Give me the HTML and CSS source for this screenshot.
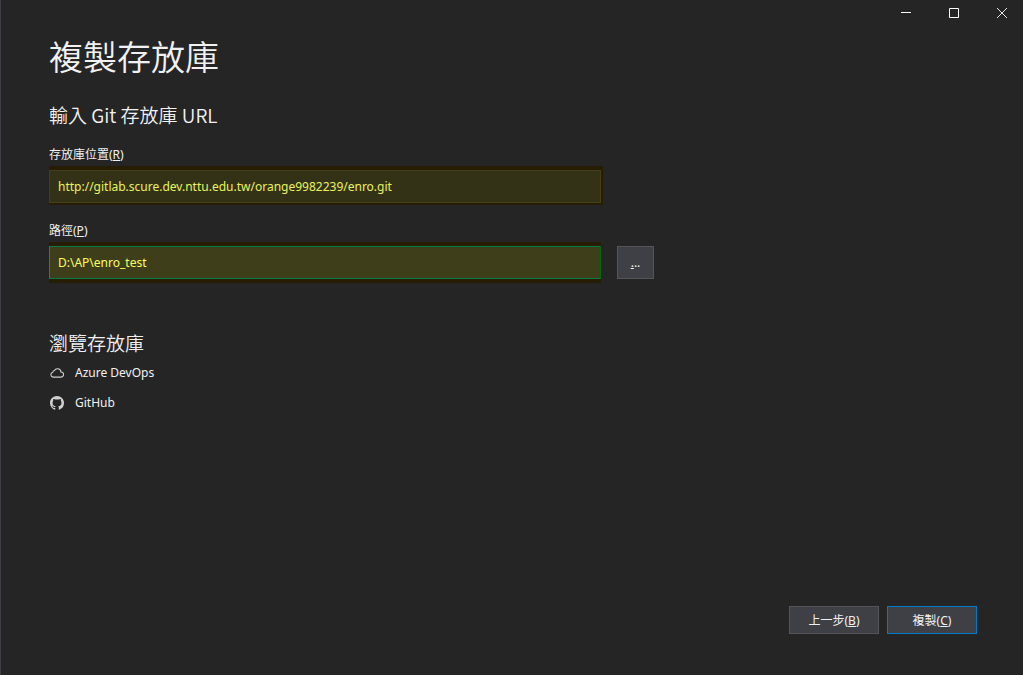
FILE: index.html
```html
<!DOCTYPE html>
<html lang="zh-Hant">
<head>
<meta charset="utf-8">
<meta name="viewport" content="width=device-width, initial-scale=1">
<title>複製存放庫</title>
<link rel="stylesheet" href="styles.css">
</head>
<body>
<div class="window">
  <header class="titlebar">
    <button class="caption-button" type="button" aria-label="最小化">
      <svg width="10" height="10" viewBox="0 0 10 10" shape-rendering="crispEdges"><path d="M0 4h10v1H0z" fill="#fff"/></svg>
    </button>
    <button class="caption-button" type="button" aria-label="最大化">
      <svg width="10" height="10" viewBox="0 0 10 10"><path d="M.5.5h9v9h-9z" fill="none" stroke="#fff"/></svg>
    </button>
    <button class="caption-button" type="button" aria-label="關閉">
      <svg width="10" height="10" viewBox="0 0 10 10"><path d="M0 0l10 10M10 0L0 10" fill="none" stroke="#e4e4e4"/></svg>
    </button>
  </header>
  <main class="content">
    <h1 class="title">複製存放庫</h1>
    <form class="clone-form" id="clone-form">
      <h2 class="subtitle">輸入 Git 存放庫 URL</h2>
      <label class="label" for="repo-url">存放庫位置(<u>R</u>)</label>
      <div class="field-row">
        <div class="highlight">
          <input class="input" id="repo-url" type="text" value="http://gitlab.scure.dev.nttu.edu.tw/orange9982239/enro.git" spellcheck="false">
        </div>
      </div>
      <label class="label" for="repo-path">路徑(<u>P</u>)</label>
      <div class="field-row">
        <div class="highlight highlight-path">
          <input class="input input-active" id="repo-path" type="text" value="D:\AP\enro_test" spellcheck="false">
        </div>
        <button class="button browse-button" type="button" aria-label="瀏覽"><u>.</u>..</button>
      </div>
    </form>
    <section class="browse">
      <h2 class="subtitle">瀏覽存放庫</h2>
      <ul class="providers">
        <li><a class="provider" href="#azure">
          <svg width="14" height="14" viewBox="0 0 14 14"><path d="M3 11.100A2.500 2.500 0 0 1 2.800 6.200A2 2 0 0 1 4.400 4.500A3.550 3.550 0 0 1 11 6A2.550 2.550 0 0 1 11 11.100z" fill="none" stroke="#cfcfcf" stroke-width="1.100"/></svg>
          <span>Azure DevOps</span></a></li>
        <li><a class="provider" href="#github">
          <svg width="14" height="14" viewBox="0 0 16 16"><path fill="#d0d0d0" d="M8 0C3.580 0 0 3.580 0 8c0 3.540 2.290 6.530 5.470 7.590.4.070.55-.17.55-.38 0-.19-.01-.82-.01-1.490-2.010.37-2.530-.49-2.690-.94-.09-.23-.48-.94-.82-1.130-.28-.15-.68-.52-.01-.53.63-.01 1.080.58 1.230.82.72 1.210 1.870.87 2.330.66.07-.52.28-.87.51-1.070-1.780-.2-3.640-.89-3.640-3.950 0-.87.31-1.590.82-2.150-.08-.2-.36-1.020.08-2.120 0 0 .67-.21 2.200.82.64-.18 1.320-.27 2-.27s1.360.09 2 .27c1.530-1.040 2.200-.82 2.200-.82.44 1.100.16 1.920.08 2.120.51.56.82 1.270.82 2.150 0 3.070-1.870 3.750-3.650 3.950.29.25.54.73.54 1.480 0 1.070-.01 1.930-.01 2.200 0 .21.15.46.55.38A8.010 8.010 0 0 0 16 8c0-4.420-3.580-8-8-8z"/></svg>
          <span>GitHub</span></a></li>
      </ul>
    </section>
  </main>
  <footer class="actions">
    <button class="button" type="button">上一步(<u>B</u>)</button>
    <button class="button button-primary" type="submit" form="clone-form">複製(<u>C</u>)</button>
  </footer>
</div>
</body>
</html>
```
FILE: styles.css
```css
* {
  box-sizing: border-box;
}

body {
  margin: 0;
  background: #252526;
  color: #f1f1f1;
  font-family: "Noto Sans", "Noto Sans CJK TC", sans-serif;
  font-size: 12px;
}

button,
input {
  font: inherit;
  color: inherit;
}

.window {
  display: flex;
  flex-direction: column;
  min-height: 100vh;
  border-left: 1px solid #3f3f46;
}

.titlebar {
  display: flex;
  justify-content: flex-end;
  gap: 6px;
  height: 26px;
}

.caption-button {
  display: flex;
  align-items: center;
  justify-content: center;
  width: 42px;
  padding: 0;
  border: 0;
  background: none;
}

.content {
  flex: 1;
  padding: 6px 48px 0;
}

.title {
  margin: 0 0 21px;
  font-family: "Noto Sans CJK TC", sans-serif;
  font-size: 34px;
  font-weight: 350;
  line-height: 48px;
}

.subtitle {
  margin: 0;
  font-family: "Noto Sans CJK TC", sans-serif;
  font-size: 19px;
  font-weight: 350;
  line-height: 28px;
}

.label {
  display: block;
  width: max-content;
  margin: 18px 0 3px;
  line-height: 16px;
}

.field-row {
  display: flex;
  align-items: center;
  gap: 16px;
}

.highlight {
  flex: 0 1 554px;
  padding: 4px 2px 2px 0;
  background: #261d04;
}

.highlight-path {
  flex-basis: 552px;
  padding: 4px 0;
}

.input {
  display: block;
  width: 100%;
  height: 33px;
  padding: 0 8px;
  border: 1px solid #434019;
  border-radius: 0;
  outline: 0;
  background: #333217;
  color: #eaf25a;
}

.input-active {
  border-color: #087a45;
  border-right-color: #006b00;
  border-left-color: #087acc;
  background: #3f3e1b;
  color: #fbff5c;
}

.button {
  width: 90px;
  height: 28px;
  padding: 0;
  border: 1px solid #555558;
  background: #3f3f46;
}

.button-primary {
  border-color: #007acc;
}

.browse-button {
  width: 37px;
  height: 33px;
}

.browse {
  margin-top: 46px;
}

.providers {
  display: grid;
  gap: 10px;
  margin: 6px 0 0;
  padding: 0 0 0 1px;
  list-style: none;
}

.provider {
  display: flex;
  align-items: center;
  gap: 11px;
  width: max-content;
  color: inherit;
  line-height: 20px;
  text-decoration: none;
}

.actions {
  display: flex;
  justify-content: flex-end;
  gap: 8px;
  padding: 0 46px 41px;
}
```
